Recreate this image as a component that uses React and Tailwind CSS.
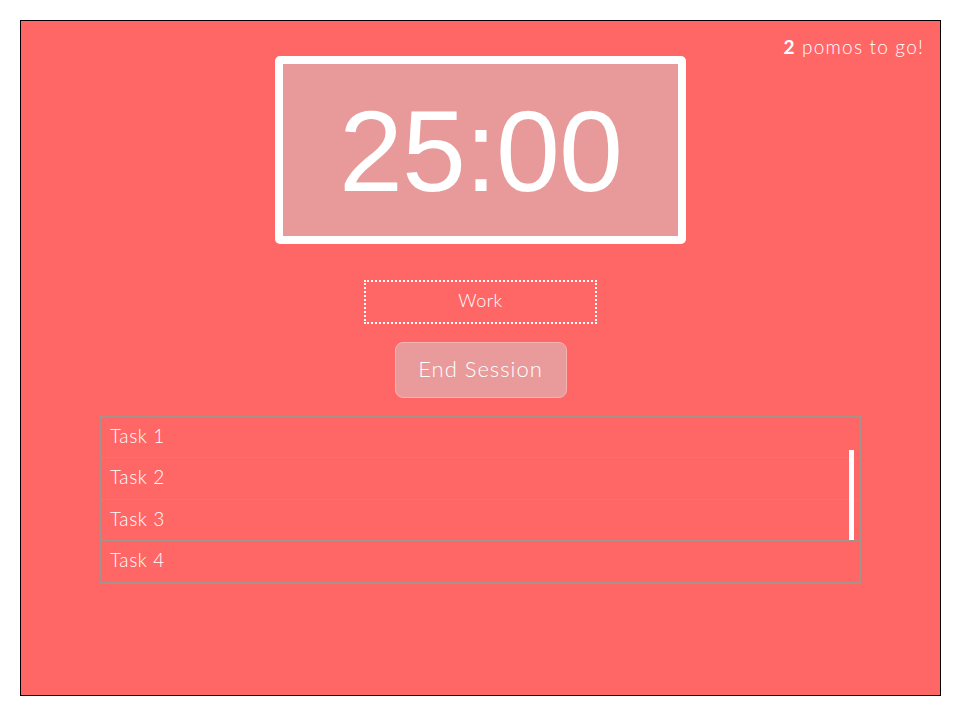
import React from "react";

const tasks = ["Task 1", "Task 2", "Task 3", "Task 4"];

export default function App() {
  return (
    <div className="w-[960px] h-[720px] bg-white p-5 pr-[19px] pb-6">
      <div className="relative h-full border border-black bg-[#ff6666] text-white font-['Lato','Noto_Sans',sans-serif]">
        <div className="absolute right-4 top-[12px] text-[19px] tracking-[1.2px] font-light">
          <span className="font-bold">2</span> pomos to go!
        </div>

        <div className="flex flex-col items-center pt-[35px]">
          <div className="w-[411px] h-[188px] border-[8px] border-white rounded-[5px] bg-[#e89999] flex items-center justify-center">
            <span className="font-['Liberation_Sans',Arial,sans-serif] text-[115px] leading-none mt-[2px] tracking-[-1px]">
              25:00
            </span>
          </div>

          <div className="mt-[36px] w-[233px] h-[44px] border-2 border-dotted border-white flex items-center justify-center text-[18px] font-light tracking-[0.5px] pb-[3px]">
            Work
          </div>

          <button className="mt-[18px] w-[172px] h-[56px] rounded-[8px] border border-[#f4b4b4] bg-[#e99a9a] text-[22px] font-light tracking-[1px] text-white pb-[3px]">
            End Session
          </button>
        </div>

        <div className="relative mx-[79px] mt-[18px] border border-[#a8938c] divide-y divide-[#a8938c]">
          {tasks.map((t, i) => (
            <div
              key={t}
              className={
                "flex items-center pl-[9px] pb-[2px] text-[19px] font-light tracking-[0.6px] " +
                (i % 2 === 0 ? "h-[41px]" : "h-[42px]")
              }
            >
              {t}
            </div>
          ))}
          <div className="absolute right-[6px] top-[33px] w-[5px] h-[90px] bg-white" />
        </div>
      </div>
    </div>
  );
}
